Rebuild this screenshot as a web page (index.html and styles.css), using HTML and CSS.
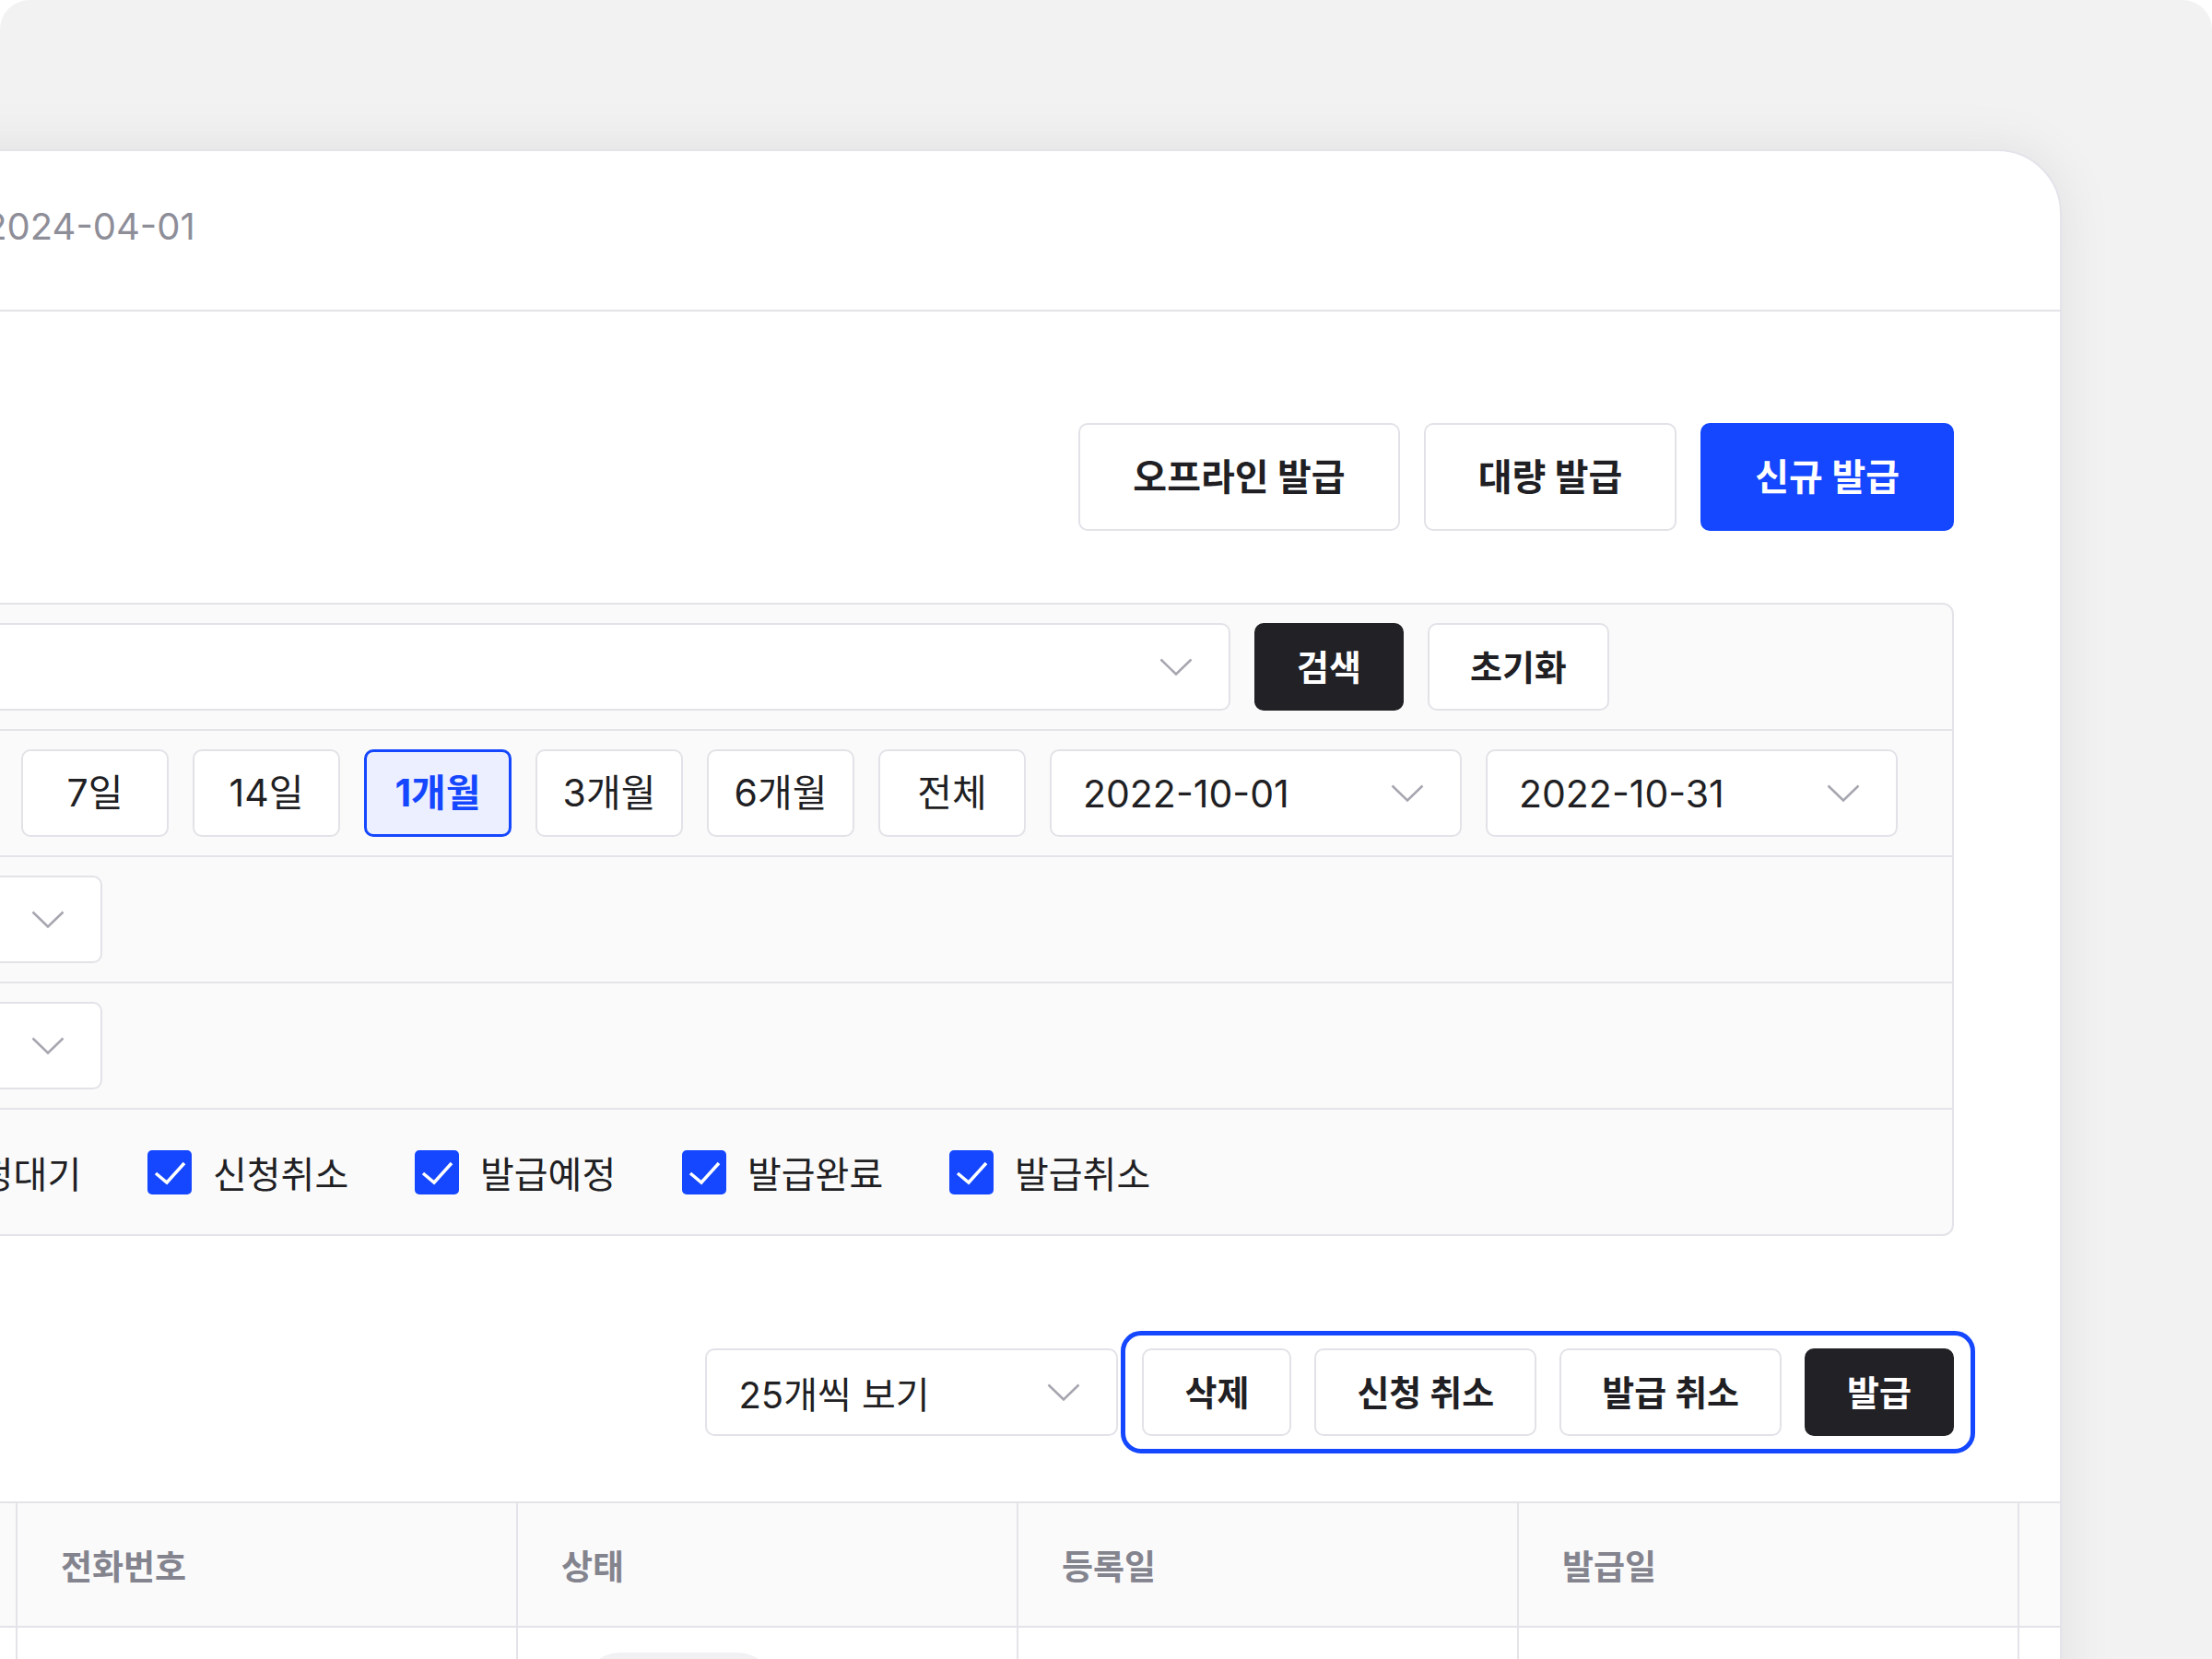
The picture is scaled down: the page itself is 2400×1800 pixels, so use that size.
FILE: index.html
```html
<!DOCTYPE html>
<html lang="ko">
<head>
    <meta charset="UTF-8">
    <meta name="viewport" content="width=device-width, initial-scale=1.0">
    <title>쿠폰 발급 관리</title>
    <link rel="stylesheet" href="styles.css">
</head>
<body>

<div class="stage">
    <div class="card">
        <div class="card-head">
            <h1 class="title">쿠폰 발급 관리</h1>
            <div class="meta">
                <span class="meta-label">수정일</span>
                <span class="meta-date">2024-04-01</span>
            </div>
        </div>

        <div class="card-body">
            <div class="actions">
                <button class="btn btn-lg">오프라인 발급</button>
                <button class="btn btn-lg">대량 발급</button>
                <button class="btn btn-lg btn-primary">신규 발급</button>
            </div>

            <div class="filter">
                <div class="filter-row">
                    <div class="filter-label">검색어</div>
                    <div class="filter-field">
                        <div class="select select-search">
                            <span>전체</span>
                            <svg class="chev" viewBox="0 0 36 19"><path d="M1.5 1.5 18 17.5 34.5 1.5"/></svg>
                        </div>
                        <button class="btn btn-dark">검색</button>
                        <button class="btn">초기화</button>
                    </div>
                </div>

                <div class="filter-row">
                    <div class="filter-label">기간</div>
                    <div class="filter-field">
                        <button class="btn btn-period">오늘</button>
                        <button class="btn btn-period">7일</button>
                        <button class="btn btn-period">14일</button>
                        <button class="btn btn-period active">1개월</button>
                        <button class="btn btn-period">3개월</button>
                        <button class="btn btn-period">6개월</button>
                        <button class="btn btn-period">전체</button>
                        <div class="select select-date">
                            <span>2022-10-01</span>
                            <svg class="chev" viewBox="0 0 36 19"><path d="M1.5 1.5 18 17.5 34.5 1.5"/></svg>
                        </div>
                        <div class="select select-date">
                            <span>2022-10-31</span>
                            <svg class="chev" viewBox="0 0 36 19"><path d="M1.5 1.5 18 17.5 34.5 1.5"/></svg>
                        </div>
                    </div>
                </div>

                <div class="filter-row">
                    <div class="filter-label">발급유형</div>
                    <div class="filter-field">
                        <div class="select select-small">
                            <span>전체</span>
                            <svg class="chev" viewBox="0 0 36 19"><path d="M1.5 1.5 18 17.5 34.5 1.5"/></svg>
                        </div>
                    </div>
                </div>

                <div class="filter-row">
                    <div class="filter-label">쿠폰유형</div>
                    <div class="filter-field">
                        <div class="select select-small">
                            <span>전체</span>
                            <svg class="chev" viewBox="0 0 36 19"><path d="M1.5 1.5 18 17.5 34.5 1.5"/></svg>
                        </div>
                    </div>
                </div>

                <div class="filter-row">
                    <div class="filter-label">상태</div>
                    <div class="filter-field checks">
                        <label class="check-item"><span class="check"><svg viewBox="0 0 48 48"><path d="M9 25l12 10 19-21"/></svg></span>신청대기</label>
                        <label class="check-item"><span class="check"><svg viewBox="0 0 48 48"><path d="M9 25l12 10 19-21"/></svg></span>신청취소</label>
                        <label class="check-item"><span class="check"><svg viewBox="0 0 48 48"><path d="M9 25l12 10 19-21"/></svg></span>발급예정</label>
                        <label class="check-item"><span class="check"><svg viewBox="0 0 48 48"><path d="M9 25l12 10 19-21"/></svg></span>발급완료</label>
                        <label class="check-item"><span class="check"><svg viewBox="0 0 48 48"><path d="M9 25l12 10 19-21"/></svg></span>발급취소</label>
                    </div>
                </div>
            </div>

            <div class="toolbar">
                <div class="select select-page">
                    <span>25개씩 보기</span>
                    <svg class="chev" viewBox="0 0 36 19"><path d="M1.5 1.5 18 17.5 34.5 1.5"/></svg>
                </div>
                <div class="bulk-actions">
                    <button class="btn">삭제</button>
                    <button class="btn">신청 취소</button>
                    <button class="btn">발급 취소</button>
                    <button class="btn btn-dark">발급</button>
                </div>
            </div>

            <div class="table-wrap">
                <table class="list">
                    <colgroup>
                        <col class="col-check">
                        <col class="col-name">
                        <col class="col-data">
                        <col class="col-data">
                        <col class="col-data">
                        <col class="col-data">
                        <col class="col-data">
                    </colgroup>
                    <thead>
                        <tr>
                            <th></th>
                            <th>이름</th>
                            <th>전화번호</th>
                            <th>상태</th>
                            <th>등록일</th>
                            <th>발급일</th>
                            <th>관리</th>
                        </tr>
                    </thead>
                    <tbody>
                        <tr>
                            <td></td>
                            <td>김민지</td>
                            <td>010-1234-5678</td>
                            <td><span class="badge">발급완료</span></td>
                            <td>2022-10-12</td>
                            <td>2022-10-14</td>
                            <td>상세</td>
                        </tr>
                    </tbody>
                </table>
            </div>
        </div>
    </div>
</div>

</body>
</html>
```

FILE: styles.css
```css
* {
    box-sizing: border-box;
}
body {
    margin: 0;
    background-color: #fff;
    font-family: Inter, "Noto Sans CJK KR", sans-serif;
    color: #1f1f24;
}
.stage {
    height: 1800px;
    padding-top: 162px;
    background-color: #f2f2f2;
    border-radius: 32px 32px 0 0;
    overflow: hidden;
}
.card {
    margin-left: -540px;
    width: 2777px;
    min-height: 1700px;
    background-color: #fff;
    border: 2px solid #e4e3ea;
    border-radius: 0 70px 0 0;
    box-shadow: 0 0 60px rgba(30, 30, 50, 0.08);
    overflow: hidden;
}
.card-head {
    height: 174px;
    display: flex;
    align-items: center;
    gap: 48px;
    padding: 0 115px 0 38px;
    border-bottom: 2px solid #e3e3e9;
}
.title {
    margin: 0;
    font-size: 44px;
    font-weight: 700;
}
.meta {
    display: flex;
    gap: 61px;
    font-size: 40px;
    color: #8e8e99;
}
.card-body {
    padding: 121px 115px 0 38px;
}

/* buttons */
.btn {
    height: 95px;
    padding: 0 44px;
    display: inline-flex;
    align-items: center;
    justify-content: center;
    flex: none;
    border: 2px solid #e2e2e8;
    border-radius: 10px;
    background-color: #fff;
    color: #1f1f24;
    font-family: Inter, "Noto Sans CJK KR", sans-serif;
    font-size: 38px;
    font-weight: 700;
    line-height: 1;
    white-space: nowrap;
    cursor: pointer;
}
.btn-lg {
    height: 117px;
    padding: 0 57px;
    font-size: 40px;
}
.btn-primary {
    background-color: #1447ff;
    border-color: #1447ff;
    color: #fff;
}
.btn-dark {
    background-color: #222226;
    border-color: #222226;
    color: #fff;
}
.btn-period {
    width: 160px;
    padding: 0;
    font-size: 41px;
    font-weight: 400;
}
.btn-period.active {
    border: 3px solid #1447ff;
    background-color: #ebefff;
    color: #1447ff;
    font-weight: 700;
}

.actions {
    display: flex;
    justify-content: flex-end;
    gap: 26px;
}

/* filter box */
.filter {
    margin-top: 78px;
    background-color: #fafafa;
    border: 2px solid #e3e3e9;
    border-radius: 12px;
}
.filter-row {
    display: flex;
    align-items: center;
    padding: 20px 0;
    border-bottom: 2px solid #e3e3e9;
}
.filter-row:last-child {
    border-bottom: none;
}
.filter-label {
    width: 335px;
    flex: none;
    padding-left: 40px;
    font-size: 38px;
    font-weight: 700;
}
.filter-field {
    height: 95px;
    display: flex;
    align-items: center;
    gap: 26px;
}

.select {
    height: 95px;
    display: flex;
    align-items: center;
    justify-content: space-between;
    flex: none;
    padding: 0 39px 0 34px;
    background-color: #fff;
    border: 2px solid #e2e2e8;
    border-radius: 10px;
    font-size: 40px;
    white-space: nowrap;
}
.chev {
    width: 36px;
    height: 19px;
    flex: none;
    fill: none;
    stroke: #a6a6b0;
    stroke-width: 2.5;
}
.select-search {
    width: 1498px;
}
.select-date {
    width: 447px;
    font-size: 41px;
}
.select-small {
    width: 274px;
}
.select-page {
    width: 448px;
}

/* status checkboxes */
.checks {
    gap: 26px;
    margin-left: 33px;
}
.check-item {
    width: 264px;
    display: flex;
    align-items: center;
    gap: 23px;
    font-size: 40px;
    white-space: nowrap;
}
.check {
    width: 48px;
    height: 48px;
    flex: none;
    border-radius: 5px;
    background-color: #1447ff;
}
.check svg {
    display: block;
    width: 48px;
    height: 48px;
    fill: none;
    stroke: #fff;
    stroke-width: 3.5;
}

/* list toolbar */
.toolbar {
    margin-top: 103px;
    margin-right: -23px;
    display: flex;
    justify-content: flex-end;
    align-items: center;
}
.bulk-actions {
    display: flex;
    gap: 25px;
    margin-left: 3px;
    padding: 14px 18px;
    border: 5px solid #1447ff;
    border-radius: 22px;
}

/* table */
.table-wrap {
    margin-top: 52px;
}
.list {
    width: 3232px;
    border-collapse: collapse;
    table-layout: fixed;
}
.col-check {
    width: 120px;
}
.col-name {
    width: 397px;
}
.col-data {
    width: 543px;
}
.list th,
.list td {
    border: 2px solid #e3e3e9;
    padding: 0 47px;
    text-align: left;
    white-space: nowrap;
}
.list th {
    height: 135px;
    background-color: #fafafa;
    color: #84848f;
    font-size: 37px;
    font-weight: 700;
}
.list td {
    height: 136px;
    font-size: 38px;
}
.badge {
    display: inline-block;
    width: 207px;
    height: 80px;
    margin-left: 24px;
    border-radius: 40px;
    background-color: #f1f1f4;
    color: #6d6d78;
    font-size: 34px;
    line-height: 80px;
    text-align: center;
}
```
